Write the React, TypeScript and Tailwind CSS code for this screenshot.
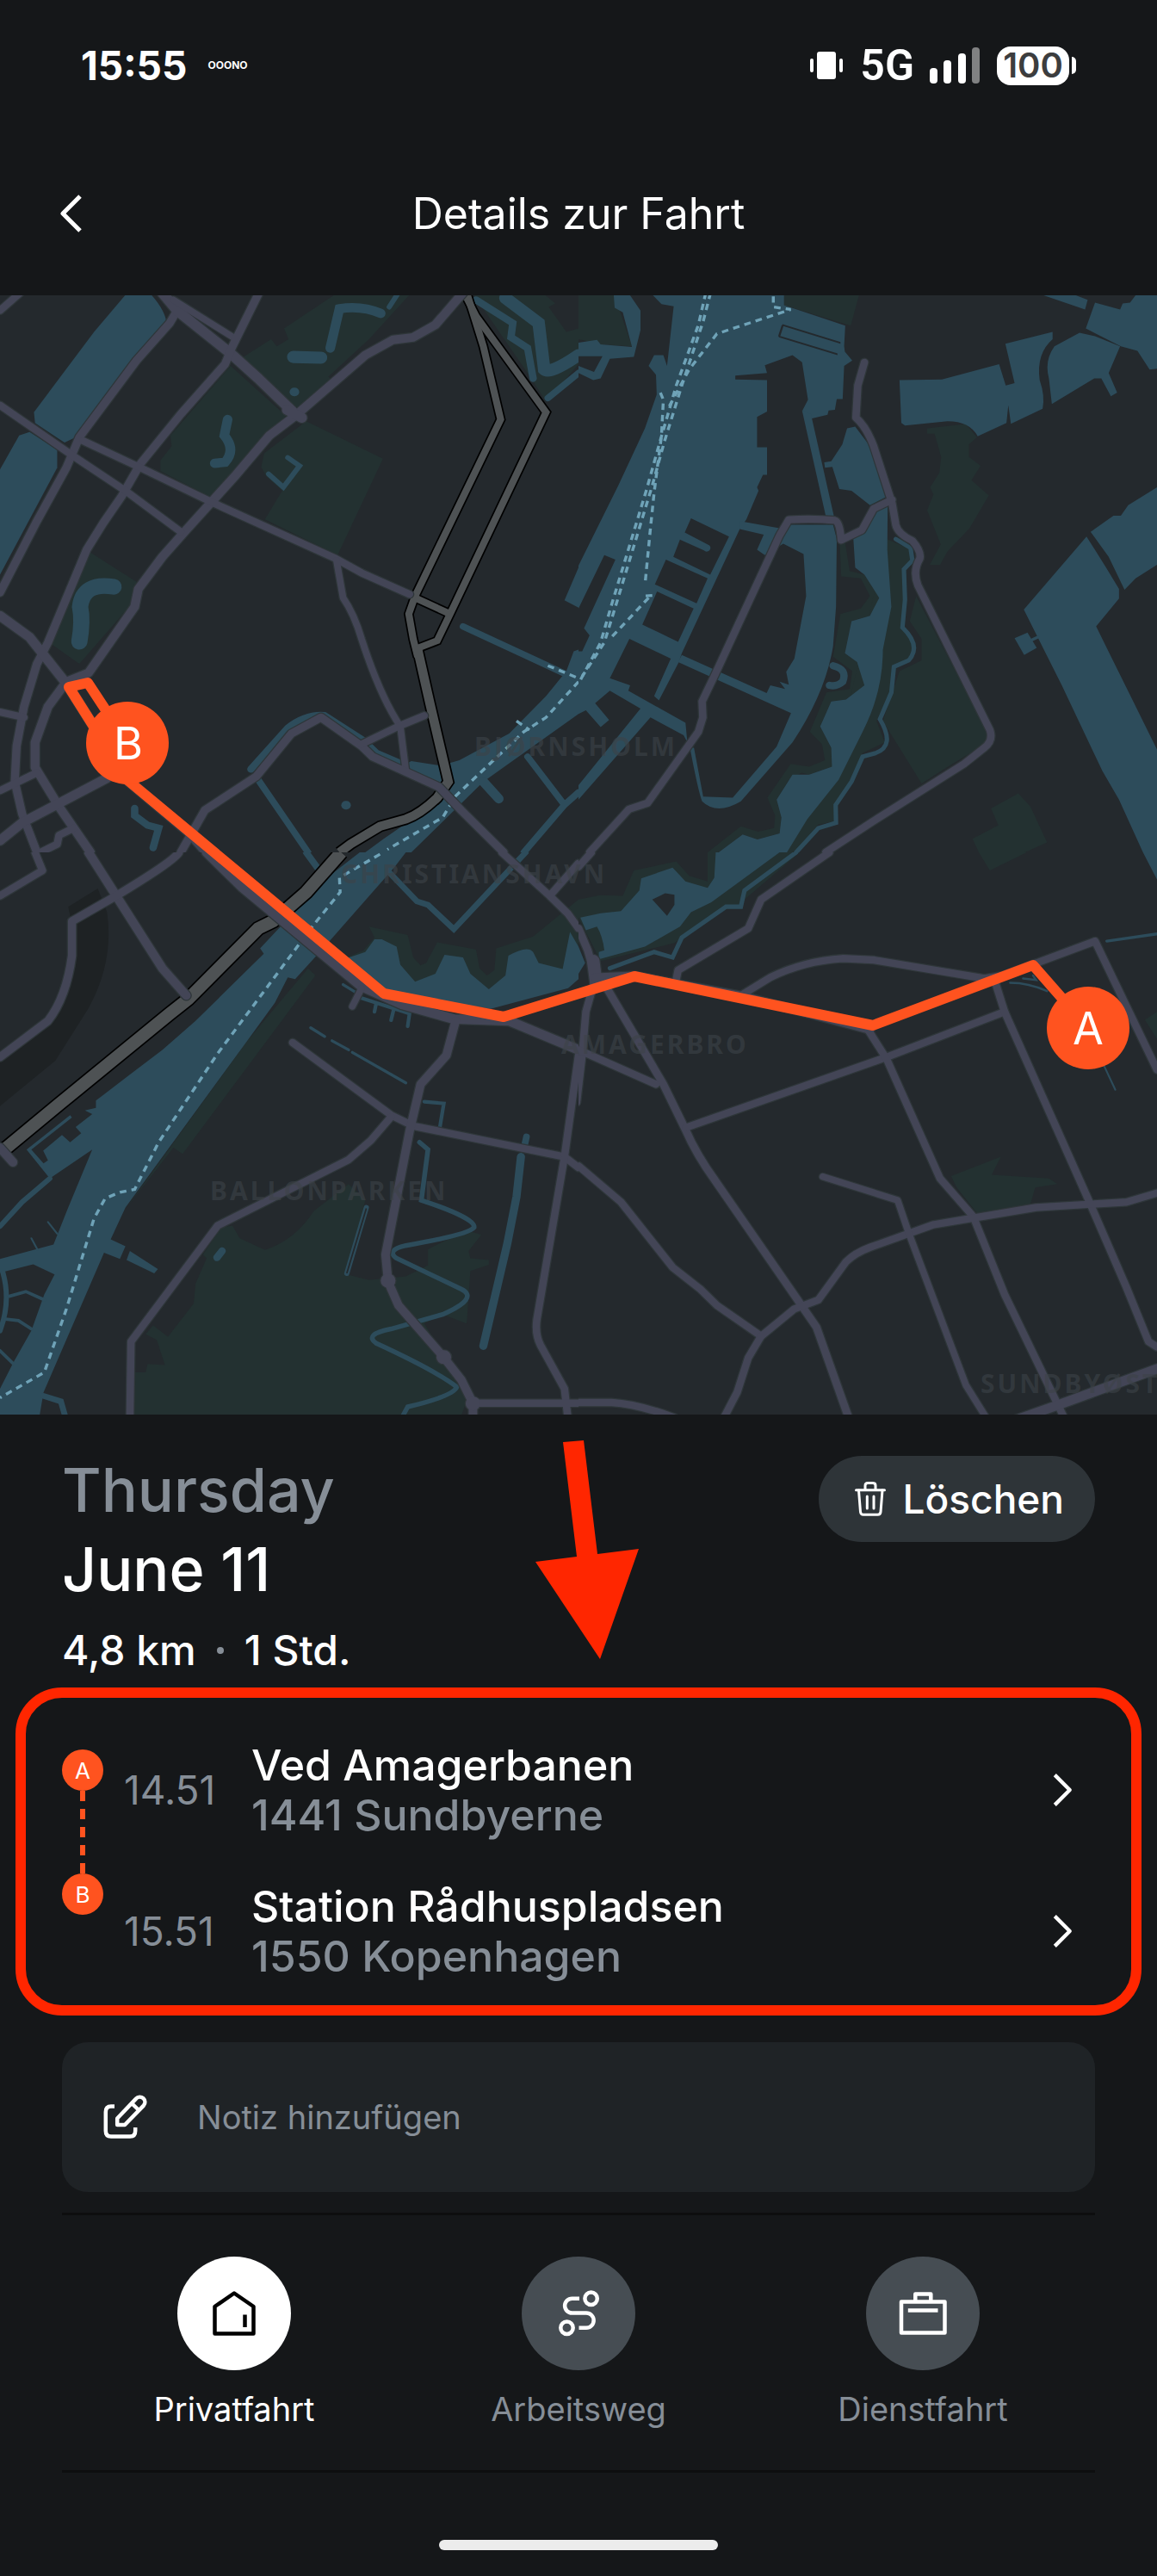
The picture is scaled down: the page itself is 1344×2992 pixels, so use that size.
import type { ReactNode } from "react"

type Line = [d: string, width: number]

interface Tile {
  x: number
  y: number
  w: number
  h: number
  shade?: string[]
  parks: string[]
  water: string[]
  canals: Line[]
  land: string[]
  roads: Line[]
  rails: Line[]
  ferries: string[]
}

// every tile is drawn on its own 1568 x 1568 grid
const tiles: Tile[] = [
  {
    x: 0,
    y: -3,
    w: 672,
    h: 650,
    parks: [
      "M770 100L915 0H1115L1000 130L890 235L900 245L820 325L775 310L660 180L735 130L750 150L782 130Z",
      "M625 205L775 345L700 420L575 575L435 500V470L465 430L462 400Z",
      "M830 360L1038 465L915 735L718 635L765 555L722 515L708 488L716 450Z",
      "M245 728L370 810L350 880L215 1040L140 985Z",
      "M1280 0H1470L1505 30L1487 40L1535 110L1568 100V200L1480 305L1440 240Z",
    ],
    water: [
      "M345 0H405Q450 50 452 90L205 405L175 420L95 365L92 335L255 110Z",
      "M0 495L52 400L80 390L155 440V490L0 790Z",
      "M1530 862L1568 770V882Z",
      "M1568 1000L1555 1005L1535 1060L1480 1130L1380 1235L1245 1310L1195 1325L1115 1312L1080 1330L1195 1380L1180 1430L1040 1530L990 1568H1115L1310 1370L1568 1180Z",
    ],
    canals: [
      ["M895 155L920 45Q980 35 1032 58", 26],
      ["M795 180L870 182", 34],
      ["M617 355L608 400Q640 440 610 475L582 478", 26],
      ["M797 278h2", 24],
      ["M780 462L812 485L768 545L728 508", 14],
      ["M308 824Q225 810 217 880Q225 920 215 978", 44],
      ["M1290 20L1390 85L1385 125L1430 155L1445 240", 20],
      ["M1370 15L1460 85L1475 215Q1490 230 1568 175", 34],
      ["M1485 295L1568 225", 18],
      ["M1080 0L1055 40", 14],
      ["M1255 935L1568 1085", 18],
      ["M1310 1370L1352 1418", 26],
      ["M1430 1300L1530 1435L1568 1400M1530 1435L1420 1568", 18],
      ["M680 1335L780 1220Q830 1180 880 1185L985 1255L1020 1290L1110 1330", 20],
      ["M700 1365L835 1568", 18],
      ["M365 1445V1465L400 1492L430 1500L415 1555", 20],
      ["M937 1436h2", 24],
    ],
    land: [],
    roads: [
      ["M0 50L55 0", 20],
      ["M440 0L480 50L460 85L370 190L215 405L180 490L100 640L0 840", 22],
      ["M440 0L480 50L625 170L700 240L800 340", 28],
      ["M470 20L640 130", 18],
      ["M702 0L630 150L610 200L490 340L380 480L330 570L280 645L235 720L130 980L100 1040L65 1160L45 1270L40 1370L60 1460L100 1568", 22],
      ["M1255 0L1180 90L1120 125L1065 132L990 175L800 345L730 400L640 510L500 670L440 740L375 830L365 880L240 1065L180 1090L130 1160L95 1260V1330L160 1440L245 1568", 24],
      ["M778 328L818 350", 28],
      ["M0 315L195 455L340 555L490 670", 20],
      ["M225 415L380 490L580 590L910 745L980 785L1110 845", 20],
      ["M912 750L930 855Q960 900 980 970Q1030 1130 1085 1215L1100 1340", 18],
      ["M0 905L80 965L180 1095L350 1370L510 1510L560 1568", 26],
      ["M0 1175L65 1190M0 1395L100 1345", 20],
      ["M0 1535L60 1485L290 1360", 26],
      ["M490 1568L555 1450L695 1355L790 1235L870 1190L980 1270L1010 1300L1190 1385L1250 1450L1365 1568", 22],
      ["M980 1265L1080 1215L1150 1185", 20],
      ["M200 1500L160 1520L155 1545L110 1568", 20],
      ["M75 1500L100 1568", 20],
    ],
    rails: [
      ["M1265 0L1310 150L1357 355L1125 850L1108 900L1120 970L1132 1020", 19],
      ["M1258 0L1290 65L1480 335L1220 900L1185 975L1135 995", 19],
      ["M1125 855L1220 900", 19],
      ["M1130 990L1165 1150L1215 1370L1185 1415Q1140 1460 1100 1475L1030 1495L950 1545L920 1568", 25],
    ],
    ferries: [
      "M1568 1090L1480 1190L1420 1230L1235 1410L1200 1470L1050 1560",
      "M1485 1045L1568 1080",
      "M1400 1200L1435 1225",
    ],
  },
  {
    x: 672,
    y: -3,
    w: 672,
    h: 650,
    parks: [
      "M557 0H762L738 92L557 35Z",
      "M0 0H95L145 150L60 145L0 130Z",
      "M945 380L1050 368L1080 405L1058 425V460L1090 485L1065 525L1112 568L1060 660L1000 725L980 762H952L982 705L945 610L962 565L953 545L978 505L983 460L965 395H945Z",
      "M708 700L722 695L735 780L775 790L815 855L790 905L740 920L722 1010L755 1035L775 1100L725 1140L685 1145L655 1215L685 1275L687 1328L625 1350L605 1345L570 1365L537 1420L550 1470L545 1515L485 1532L445 1518L380 1568H350L440 1495L487 1510L530 1500L533 1465L512 1415L575 1320L625 1328L668 1310L660 1265L627 1230L672 1120L735 1110L742 1060L690 1020L710 900L765 885L790 850L765 800L712 795Z",
      "M835 690L905 720L900 750L880 775L882 860L875 940L915 990L885 1035L850 1050L845 1120L808 1200L830 1260L770 1290L740 1365L695 1430L700 1480L650 1490L585 1568H550L700 1300Z",
      "M915 850L1110 1235L1100 1265L990 1335L930 1375L825 1200L870 1060L930 1030V970L898 920Z",
      "M1118 1445L1192 1403L1225 1440L1270 1540L1210 1568H1085L1068 1530L1138 1492Z",
    ],
    water: [
      "M195 0L225 32L258 38L240 205L230 175H205L190 205L210 230L212 285L180 380L108 540L0 765V1180L85 1080L138 970L250 1025L205 1130L218 1142L272 1035L280 1010L437 662L455 635L488 555L484 545L500 510H511V433H484V348L511 333V245L425 243V232L511 225L505 203L580 175L606 195L622 300L607 330L633 352L675 342L678 330L695 328L700 298H716L720 205L742 190L722 165L720 150L723 92L557 35V0Z",
      "M0 1080H85L140 1100L135 1115L290 1205L295 1260L285 1240L195 1190L0 1420V1380L168 1165L85 1115L45 1150L83 1197L60 1217L20 1170L0 1180Z",
      "M437 640L545 660L560 650H690L700 690L698 880L690 990Q670 1120 580 1260L440 1425Q375 1465 335 1425Q325 1400 302 1275H313L338 1412L418 1415L537 1272L576 1178L270 1035L280 1015L510 1122L520 1100L560 1110L545 1090L570 1098L563 1062L585 1025L617 850L610 732L555 703L505 735L484 720L502 678L437 662Z",
      "M606 330L630 340L692 625H670Z",
      "M728 380L750 375L790 430L838 570L790 595L740 555L707 550L688 488L668 490L666 475L685 472L715 425Z",
      "M745 690L770 665L800 610L838 600L837 720L848 880L825 1000Q825 1120 770 1230L705 1365L620 1475L565 1568H380L445 1518L485 1532L545 1515L550 1470L537 1420L580 1350L625 1350L687 1328L685 1275L655 1215L685 1145L725 1140L775 1100L755 1035L722 1010L740 920L790 905L815 855L775 790L750 770Z",
      "M95 0H135L168 50V105L150 180L85 185L60 240L40 245L0 225V205L42 222L65 178L0 178V140L50 132L60 145L145 152L120 55L98 42Z",
      "M870 245L985 243L1140 200L1158 260L1182 253L1157 143L1285 110V130Q1240 170 1250 245Q1265 290 1258 325L1172 367L1165 315L1160 365L1082 402Q1060 360 1000 360L885 372L875 365Z",
      "M1290 150L1358 112L1400 122L1468 150L1437 225L1460 280L1443 290L1417 240H1398L1283 312L1275 240Q1262 190 1290 150Z",
      "M1400 28L1468 47L1475 30L1495 28L1515 0H1568V213L1548 215L1515 163L1470 150L1375 100Z",
      "M1240 0H1330L1380 20L1373 47Z",
      "M1568 545L1490 595L1470 625H1450L1388 670L1437 740L1480 832L1510 800L1568 762Z",
      "M1377 683L1430 770L1465 830V857L1403 935L1568 1280V1568H1530L1465 1420L1420 1340L1310 1100L1207 888Z",
      "M1182 968L1217 952L1242 995L1208 1015Z",
    ],
    canals: [
      ["M860 690L900 715L905 750L882 775L885 860L878 938Q930 990 895 1030L855 1048L848 1120L817 1195Q860 1270 805 1290L770 1300L740 1370L697 1435L698 1485L650 1500L590 1568", 12],
      ["M690 1045Q730 1055 716 1090Q700 1105 680 1100", 20],
      ["M1230 972L1245 965", 8],
    ],
    land: [
      "M305 632L408 683L357 790L257 740L275 692L340 722A8 8 0 0 0 355 708L288 672Z",
      "M237 748L350 800L320 870L207 817Z",
      "M213 837L312 885L270 978L173 930Z",
      "M70 735L100 748L15 940L30 960L10 1005H0V885Z",
      "M553 88L710 138V143L553 93ZM543 120L702 170V175L543 125ZM551 90L556 92L546 124L541 122Z",
    ],
    roads: [
      ["M775 195L757 260L752 350Q780 375 800 430L850 590L860 650Q865 675 905 695Q930 725 925 745Q905 780 920 820L1115 1225Q1125 1255 1100 1275L1045 1320L800 1480L670 1568", 20],
      ["M850 580L800 605L768 665L712 693Q708 640 695 638Q640 632 570 636L545 680L370 1070L335 1145L337 1190L325 1230L187 1430L137 1447L30 1568", 20],
    ],
    rails: [],
    ferries: [
      "M345 0L325 90L265 260L220 420L185 550L88 880L60 980L0 1095",
      "M358 0L338 80L280 260L232 420L200 540L100 880L70 980L10 1075",
      "M528 10V40L575 47L375 115L300 215L240 330",
      "M222 280L230 300L225 400L205 560L195 660L180 820",
      "M200 848L175 850M190 855L85 970",
    ],
  },
  {
    x: 0,
    y: 647,
    w: 672,
    h: 660,
    shade: ["M185 150L265 100L290 165Q310 300 240 430L150 575L0 700V560L130 460Q200 370 195 200Z"],
    parks: [
      "M835 320L855 340L495 832L470 815L340 985L670 520Z",
      "M1000 205L1105 228L1120 290L1140 312L1155 305L1185 248L1290 268L1300 320L1320 340L1340 325L1345 265L1445 232L1568 130V300L1520 330L1500 360L1320 390L1100 370L940 290L985 270L1015 235Z",
      "M600 1035L630 1030L650 1065L718 1097Q800 1070 850 990L945 915L990 960L940 1165L1000 1180L1100 1170L1160 1140V1095L1210 1070L1270 1045L1305 1055L1270 1100L1275 1120L1325 1125V1138L1275 1155L1265 1300L1200 1275L1150 1300L1270 1500L1245 1568H360L365 1435H395L400 1412L447 1415L425 1345L395 1330L415 1305L455 1337L525 1245L530 1190L560 1120L550 1110Z",
    ],
    water: [
      "M975 0H1100L1070 40L880 260L800 350L780 345L745 415L670 520L340 980L300 1068L340 1087L325 1122L282 1105L118 1490L105 1568H0V1480L35 1410L85 1320L120 1220L148 1165L90 1137L0 1160V1122L145 1082L183 985L250 820L135 900L72 820L190 725L195 732L85 820L118 858L130 850L117 823L168 780L190 800L220 775L205 758L250 722L230 712L260 705V685L350 615L440 545L530 465L715 280L705 265L880 75Z",
      "M940 292L990 275L1015 240H1035L1075 260L1085 310L1125 357L1180 335L1205 283L1255 290L1275 335L1325 378L1370 340L1378 285Q1430 255 1445 275L1460 305L1525 322L1545 220L1568 260V350L1540 375L1330 432L1040 385Z",
      "M352 1100L428 1150L418 1162L343 1125Z",
    ],
    canals: [
      ["M135 900L60 965L0 1032", 14],
      ["M8 1160Q30 1240 0 1320", 14],
      ["M25 1225L70 1212L120 1235M15 1288L50 1292L85 1315M0 1375L35 1410", 9],
      ["M118 1500L165 1515L180 1568", 16],
      ["M130 1020L155 1052M85 1065L102 1097", 5],
      ["M830 0L880 70", 18],
      ["M1050 50L1130 135L1160 145L1230 212L1425 0", 16],
      ["M930 365L970 390", 8],
      ["M980 402L1110 445L1105 480M1020 415L1015 440M1068 430L1060 463", 10],
      ["M842 484L880 508M900 520L945 545M955 552L1100 636", 8],
      ["M1150 688L1203 693L1192 760", 10],
      ["M1137 800L1160 820L1142 960Q1290 1010 1285 1035Q1270 1055 1100 1085Q1045 1098 1075 1120L1250 1205Q1300 1230 1200 1275L1060 1315Q985 1330 1020 1355Q1180 1430 1238 1475Q1230 1500 1105 1530L1085 1568", 13],
      ["M1427 785L1422 808", 18],
      ["M1412 840L1400 950L1375 1080L1310 1362", 22],
      ["M993 980L940 1162", 14],
      ["M602 1100L588 1118", 20],
    ],
    land: ["M991 982L995 983L942 1162L938 1161Z"],
    roads: [
      ["M0 120L115 50L95 0", 20],
      ["M240 0L315 120L440 320L505 395", 24],
      ["M485 0Q470 25 315 120L195 190V285Q180 400 130 465L0 565", 22],
      ["M560 0L655 95L980 370L1090 420L1230 460L1380 465L1568 545", 26],
      ["M980 375L955 425", 18],
      ["M793 525L1060 725L1120 755L1530 840L1568 870", 20],
      ["M1235 465L1210 560L1140 640L1110 770L1045 1110L1052 1185L1080 1250L1200 1390L1250 1455L1282 1520V1568", 23],
      ["M1060 730L1005 795L945 848L590 1030L355 1350L352 1568", 20],
      ["M1568 560L1530 840L1455 1290Q1450 1330 1465 1360L1530 1480L1540 1568", 20],
      ["M1282 1520H1568", 20],
      ["M1360 0L1490 120L1540 170L1568 210M1490 120L1568 30", 20],
      ["M1051 1182h2M1202 1393h2M1281 1521h2", 38],
      ["M0 815L35 855", 24],
    ],
    rails: [["M925 0L830 110L740 190L700 210L510 405L460 445L160 695L0 830", 34]],
    ferries: ["M1030 5L920 70L922 110L850 200L740 350L590 555L430 800L365 930L325 938L285 955L255 1010L180 1260L120 1435L0 1505"],
  },
  {
    x: 672,
    y: 647,
    w: 672,
    h: 660,
    parks: [
      "M0 130L60 118L120 120L150 50L265 25L300 65L350 80V0H600L450 130L440 150L395 148L260 250L60 300L0 180Z",
      "M1085 0H1215L1115 50Z",
      "M1010 893L1145 840L1120 890L1275 900L1298 915L1238 925L1225 970L1080 995L1025 925Z",
      "M1568 440L1535 462L1568 515Z",
    ],
    water: [
      "M372 0H545L360 138L305 165L275 205L180 260L55 295V275L70 270Q65 230 50 205L20 215L5 180L60 168L115 162L165 105L170 72L255 42L290 80L350 98L368 70Z",
      "M0 260L18 305L0 335Z",
      "M1530 0H1568V75Z",
    ],
    canals: [
      ["M590 0L450 105L440 150L400 150L280 235L255 290L205 275L85 320", 12],
      ["M1432 245L1568 225", 8],
      ["M1170 360Q1220 360 1270 383M1205 348L1240 352L1232 340", 6],
      ["M1425 590L1455 655", 5],
    ],
    land: ["M200 130L235 113L260 117V145L240 175Z"],
    roads: [
      ["M0 40L35 0", 20],
      ["M0 210L25 270L45 340L80 380L230 640L290 765Q320 835 370 905L645 1310L735 1568", 21],
      ["M40 300L48 360", 34],
      ["M45 350L20 440L10 560L-5 690", 20],
      ["M45 345L150 340L440 395L790 490", 22],
      ["M265 350L270 325L460 210L495 130L680 0", 20],
      ["M440 395L520 345Q610 300 715 293L800 297L1100 348L1150 340L1400 245L1568 600", 20],
      ["M290 760L835 565L1155 440", 20],
      ["M785 490L835 570L980 900L1070 1005L1155 1220L1320 1568", 20],
      ["M1130 360L1155 440L1385 965L1485 1200L1545 1350L1568 1365", 20],
      ["M0 545L210 640", 20],
      ["M0 865L115 965L255 1145L330 1205L375 1250L495 1335", 20],
      ["M390 1568L430 1490L460 1395L495 1335L585 1260L650 1235L725 1130Q750 1105 790 1090L960 1028L1240 980L1485 965L1568 940", 20],
      ["M662 895L865 960L895 1050L1050 1470L1110 1568", 18],
      ["M0 1518H90Q160 1522 260 1560", 20],
      ["M1180 1568L1300 1525L1568 1425", 26],
    ],
    rails: [],
    ferries: [],
  },
]

const districts = [
  { name: "BJØRNSHOLM", x: 551, y: 535 },
  { name: "CHRISTIANSHAVN", x: 396, y: 683 },
  { name: "AMAGERBRO", x: 652, y: 881 },
  { name: "BALLONPARKEN", x: 244, y: 1051 },
  { name: "SUNDBYØST", x: 1139, y: 1275 },
]

function MapTile({ tile }: { tile: Tile }) {
  return (
    <svg x={tile.x} y={tile.y} width={tile.w} height={tile.h} viewBox="0 0 1568 1568" preserveAspectRatio="none" fill="none">
      <g fill="#1e2224">{tile.shade?.map((d) => <path key={d} d={d} />)}</g>
      <g fill="#233131">{tile.parks.map((d) => <path key={d} d={d} />)}</g>
      <g fill="#2d4c5b">{tile.water.map((d) => <path key={d} d={d} />)}</g>
      <g stroke="#2d4c5b" strokeLinecap="round">
        {tile.canals.map(([d, w]) => <path key={d} d={d} strokeWidth={w} />)}
      </g>
      <g fill="#24292d">{tile.land.map((d) => <path key={d} d={d} />)}</g>
      <g stroke="#6fa3b8" strokeWidth="8" strokeDasharray="18 14">
        {tile.ferries.map((d) => <path key={d} d={d} />)}
      </g>
      <g stroke="#000000">{tile.rails.map(([d, w]) => <path key={d} d={d} strokeWidth={w + 8} />)}</g>
      <g stroke="#4e5254">{tile.rails.map(([d, w]) => <path key={d} d={d} strokeWidth={w} />)}</g>
      <g stroke="#2e3639" strokeLinecap="round" strokeLinejoin="round">
        {tile.roads.map(([d, w]) => <path key={d} d={d} strokeWidth={w + 6} />)}
      </g>
      <g stroke="#434556" strokeLinecap="round" strokeLinejoin="round">
        {tile.roads.map(([d, w]) => <path key={d} d={d} strokeWidth={w} />)}
      </g>
    </svg>
  )
}

function TripMap() {
  return (
    <svg viewBox="0 0 1344 1300" className="block w-full bg-[#24292d]" role="img" aria-label="Karte der Fahrt">
      {tiles.map((tile) => (
        <MapTile key={`${tile.x}-${tile.y}`} tile={tile} />
      ))}
      <g className="fill-[#3d4348]/60 font-['Noto_Sans',sans-serif] text-[30px] font-bold tracking-widest">
        {districts.map((d) => (
          <text key={d.name} x={d.x} y={d.y}>{d.name}</text>
        ))}
      </g>
      <path
        d="M148 520L102 450L80 455L148 563L446 811L585 838L737 791L1014 848L1200 778L1264 851"
        fill="none"
        stroke="#ff531f"
        strokeWidth="12"
        strokeLinejoin="round"
      />
      <g fill="#ff531f">
        <circle cx="148" cy="520" r="48" />
        <circle cx="1264" cy="851" r="48" />
      </g>
      <g className="fill-white font-['Inter',sans-serif] text-[52px]" textAnchor="middle">
        <text x="149" y="539">B</text>
        <text x="1264" y="870">A</text>
      </g>
    </svg>
  )
}

function StatusBar() {
  return (
    <div className="flex h-[152px] items-center px-[94px] text-white">
      <span className="text-[46px] font-bold leading-none">15:55</span>
      <span className="ml-6 text-[12px] font-bold leading-none">OOONO</span>
      <div className="ml-auto flex items-center">
        <svg className="h-8 w-[38px]" viewBox="0 0 38 32" fill="#ffffff">
          <rect x="8" y="0" width="22" height="32" rx="3" />
          <rect x="0" y="8" width="4" height="16" rx="2" />
          <rect x="34" y="8" width="4" height="16" rx="2" />
        </svg>
        <span className="ml-5 font-['Roboto',sans-serif] text-[50px] font-semibold leading-none">5G</span>
        <svg className="ml-[18px] h-[42px] w-[58px]" viewBox="0 0 58 42" fill="#ffffff">
          <rect x="0" y="24" width="9" height="18" rx="4" />
          <rect x="16" y="15" width="9" height="27" rx="4" />
          <rect x="33" y="7" width="9" height="35" rx="4" />
          <rect x="49" y="0" width="9" height="42" rx="4" fill="#808182" />
        </svg>
        <span className="ml-5 flex h-[45px] w-[84px] items-center justify-center rounded-2xl bg-white text-[40px] font-semibold leading-none text-[#3c3d3e]">
          100
        </span>
        <span className="ml-[3px] h-5 w-[5px] rounded-r-full bg-white" />
      </div>
    </div>
  )
}

function Chevron({ className }: { className: string }) {
  return (
    <svg className={className} viewBox="0 0 26 46" fill="none" stroke="currentColor" strokeWidth="5" strokeLinejoin="round">
      <path d="M3 3L23 23L3 43" />
    </svg>
  )
}

function TrashIcon() {
  return (
    <svg className="h-10 w-9" viewBox="0 0 36 40" fill="none" stroke="currentColor" strokeWidth="3" strokeLinecap="round" strokeLinejoin="round">
      <path d="M1.5 9.7H34.5M12 9V4.5Q12 1.5 15 1.5H21Q24 1.5 24 4.5V9" />
      <path d="M4.5 10L6.5 35Q6.8 38.3 10 38.3H26.5Q29.7 38.3 30 35L32 10M14.3 17V31M22 17V31" />
    </svg>
  )
}

function NoteIcon() {
  return (
    <svg className="h-[52px] w-[52px]" viewBox="0 0 52 52" fill="none" stroke="currentColor" strokeWidth="4.5">
      <path d="M13 13.6H9Q2.8 13.6 2.8 20V42Q2.8 48.5 9 48.5H31Q37.2 48.5 37.2 42V38" />
      <path d="M16.2 35V27.500L38 4.600A5.800 5.800 0 0 1 46.800 12.600L25 35ZM33.500 10.500L40.800 17.500" strokeLinejoin="round" />
    </svg>
  )
}

const stops = [
  { time: "14.51", name: "Ved Amagerbanen", city: "1441 Sundbyerne" },
  { time: "15.51", name: "Station Rådhuspladsen", city: "1550 Kopenhagen" },
]

const categories: { label: string; active: boolean; icon: ReactNode }[] = [
  {
    label: "Privatfahrt",
    active: true,
    icon: <path d="M30 6.5L52.5 22V53.5H7.5V22ZM42.5 31.5V46" />,
  },
  {
    label: "Arbeitsweg",
    active: false,
    icon: (
      <>
        <circle cx="44.6" cy="12.7" r="7.2" />
        <circle cx="16.5" cy="46.8" r="7.2" />
        <path d="M31 12.7H22.5A8.4 8.4 0 0 0 22.5 29.5H39A8.6 8.6 0 0 1 39 46.8H30.5" />
      </>
    ),
  },
  {
    label: "Dienstfahrt",
    active: false,
    icon: <path d="M5 16.5H55.5V52.5H5ZM21.3 16V7.5H39.3V16M12.8 26.5H47.5" />,
  },
]

function StopList() {
  return (
    <section className="mx-[18px] mt-[13px] flex rounded-[54px] border-[12px] border-[#ff2600] pb-7 pl-[42px] pr-[68px] pt-[49px]">
      <div className="mt-[11px] flex w-12 flex-col items-center text-[26px] text-white">
        <span className="flex h-12 w-12 items-center justify-center rounded-full bg-[#ff531f]">A</span>
        <svg className="h-24 w-[6px]" viewBox="0 0 6 96">
          <path d="M3 0V96" stroke="#ff531f" strokeWidth="6" strokeDasharray="12 9" />
        </svg>
        <span className="flex h-12 w-12 items-center justify-center rounded-full bg-[#ff531f]">B</span>
      </div>
      <div className="flex flex-1 flex-col gap-12">
        {stops.map((stop) => (
          <button key={stop.name} type="button" className="flex items-center pl-6 text-left leading-[58px]">
            <span className="w-[148px] text-[46px] text-[#868e97]">{stop.time}</span>
            <span className="flex flex-1 flex-col text-[50px] font-medium">
              <span className="text-white">{stop.name}</span>
              <span className="text-[#868e97]">{stop.city}</span>
            </span>
            <Chevron className="h-10 w-6 text-white" />
          </button>
        ))}
      </div>
    </section>
  )
}

export default function App() {
  return (
    <main className="min-h-screen bg-[#151719] font-['Inter',sans-serif]">
      <StatusBar />

      <header className="grid h-[191px] grid-cols-[1fr_auto_1fr] items-center px-[70px] text-white">
        <button type="button" aria-label="Zurück" className="justify-self-start">
          <Chevron className="h-[46px] w-[26px] rotate-180" />
        </button>
        <h1 className="text-[50px] leading-[60px]">Details zur Fahrt</h1>
      </header>

      <TripMap />

      <section className="relative flex items-start justify-between px-[72px] pt-[42px]">
        <div>
          <h2 className="text-[70px] font-medium leading-[92px]">
            <span className="block text-[#868e97]">Thursday</span>
            <span className="block text-white">June 11</span>
          </h2>
          <p className="mt-[18px] flex items-center gap-6 text-[48px] font-medium leading-[60px] text-white">
            4,8 km
            <span className="h-2 w-2 rounded-full bg-[#868e97]" />
            1 Std.
          </p>
        </div>
        <button type="button" className="mt-[6px] flex h-[100px] items-center gap-5 rounded-full bg-[#2e3438] pl-[42px] pr-9 text-[46px] font-medium text-white">
          <TrashIcon />
          Löschen
        </button>
        {/* pointer to the stop list */}
        <svg className="absolute left-1/2 top-[30px] h-[254px] w-[120px] -translate-x-[50px]" viewBox="622 1673 120 254" fill="#ff2600">
          <path d="M654 1675L678 1673L694 1805L742 1799L697 1927L622 1814L670 1808Z" />
        </svg>
      </section>

      <StopList />

      <div className="px-[72px]">
        <label className="mt-[31px] flex h-[174px] items-center gap-[57px] rounded-[30px] bg-[#1f2326] px-12 text-white">
          <NoteIcon />
          <input
            type="text"
            aria-label="Notiz"
            placeholder="Notiz hinzufügen"
            className="flex-1 bg-transparent text-[38px] outline-none placeholder:text-[#868e97]"
          />
        </label>

        <div className="mt-6 grid grid-cols-3 border-y-[3px] border-[#0d0e0f] pb-[47px] pt-12">
          {categories.map((category) => (
            <button key={category.label} type="button" aria-pressed={category.active} className="flex flex-col items-center gap-[21px]">
              <span
                className={`flex h-[132px] w-[132px] items-center justify-center rounded-full ${
                  category.active ? "bg-white text-black" : "bg-[#464d53] text-white"
                }`}
              >
                <svg className="h-[60px] w-[60px]" viewBox="0 0 60 60" fill="none" stroke="currentColor" strokeWidth="4.5" strokeLinejoin="round">
                  {category.icon}
                </svg>
              </span>
              <span className={`text-[38px] leading-[48px] ${category.active ? "text-white" : "text-[#868e97]"}`}>
                {category.label}
              </span>
            </button>
          ))}
        </div>
      </div>

      <div className="flex justify-center pb-[30px] pt-[78px]">
        <span className="h-3 w-[324px] rounded-full bg-[#ececec]" />
      </div>
    </main>
  )
}
